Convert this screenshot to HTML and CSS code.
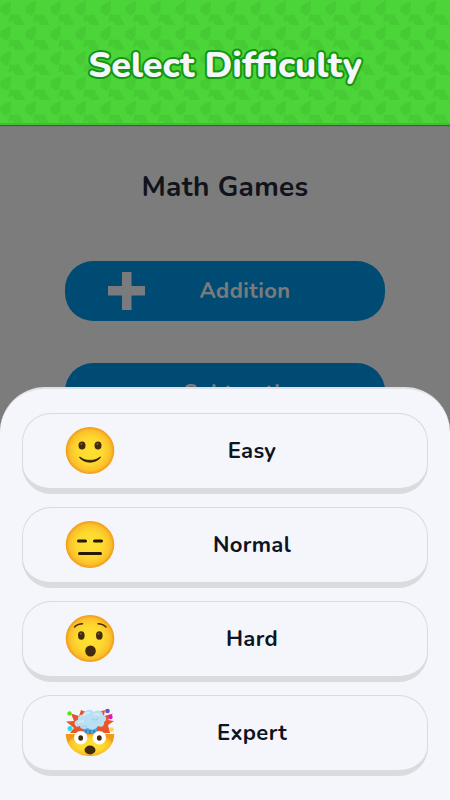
FILE: index.html
```html
<!DOCTYPE html>
<html lang="en">
<head>
    <meta charset="UTF-8">
    <meta name="viewport" content="width=device-width, initial-scale=1.0">
    <title>Math Games</title>
    <link rel="stylesheet" href="styles.css">
</head>
<body>
    <header class="header">
        <svg class="header-pattern" width="450" height="123">
            <defs>
                <pattern id="leaves" width="25" height="25" patternUnits="userSpaceOnUse">
                    <path d="M.5 6.500L5 3.500 11 .5 10.500 11 6.500 16 .3 12zM9.500 13.500L13 15l6-.7L25 25h-9.500L12.500 21 8 22.500z"/>
                </pattern>
            </defs>
            <rect width="450" height="123" fill="url(#leaves)"/>
        </svg>
        <h1>Select Difficulty</h1>
    </header>

    <!-- Games list -->
    <div class="games">
        <h2>Math Games</h2>
        <button class="game-btn">
            <svg class="plus" width="38" height="38" viewBox="0 0 38 38"><path d="M14 0h9.500v14H37v9.500H23.500V38H14V23.500H0V14h14z"/></svg>
            <span>Addition</span>
        </button>
        <button class="game-btn">
            <span>Subtraction</span>
        </button>
    </div>
    <div class="overlay"></div>

    <!-- Difficulty sheet -->
    <div class="sheet">
        <button class="level">
            <svg class="emoji" viewBox="0 0 50 50">
                <defs>
                    <radialGradient id="face">
                        <stop offset="0" stop-color="#fee133"/>
                        <stop offset=".55" stop-color="#fdd92f"/>
                        <stop offset=".85" stop-color="#fbc02a"/>
                        <stop offset="1" stop-color="#f19a16"/>
                    </radialGradient>
                </defs>
                <ellipse cx="25" cy="24.500" rx="24.300" ry="23.500" fill="url(#face)"/>
                <g fill="#422b0d">
                    <ellipse cx="17" cy="19.500" rx="3.500" ry="4.100"/>
                    <ellipse cx="33" cy="19.500" rx="3.500" ry="4.100"/>
                </g>
                <g fill="#7b5a33"><circle cx="16.300" cy="18" r="1"/><circle cx="32.300" cy="18" r="1"/></g>
                <path d="M15 31C18 33.500 21 34.300 25 34.300s7-.8 10-3.300c.7-.5.5.5 0 1.200-5.500 5.400-14.500 5.400-20 0-.6-.8-.7-1.600 0-1.200z" fill="#2c1c05" stroke="#2c1c05" stroke-width=".6"/>
            </svg>
            <span>Easy</span>
        </button>
        <button class="level">
            <svg class="emoji" viewBox="0 0 50 50">
                <ellipse cx="25" cy="24.500" rx="24.300" ry="23.500" fill="url(#face)"/>
                <path d="M13.500 21h7M29.500 21h7M14.500 33.500h21" stroke="#241704" stroke-width="3" stroke-linecap="round"/>
            </svg>
            <span>Normal</span>
        </button>
        <button class="level">
            <svg class="emoji" viewBox="0 0 50 50">
                <ellipse cx="25" cy="24.500" rx="24.300" ry="23.500" fill="url(#face)"/>
                <path d="M9.500 13q3-3.300 8-3.300M33 9.700q5 0 8 3.300" stroke="#422b0d" stroke-width="1.400" stroke-linecap="round" fill="none"/>
                <g fill="#422b0d">
                    <ellipse cx="16.300" cy="21.500" rx="3.300" ry="4.200"/>
                    <ellipse cx="34.300" cy="21.500" rx="3.300" ry="4.200"/>
                    <ellipse cx="25.500" cy="37" rx="5.300" ry="5.500"/>
                </g>
                <g fill="#7b5a33"><circle cx="15.700" cy="19.800" r="1"/><circle cx="33.700" cy="19.800" r="1"/></g>
            </svg>
            <span>Hard</span>
        </button>
        <button class="level">
            <svg class="emoji" viewBox="0 0 50 50">
                <path d="M5 25L9 20 1 13.500 9 13 6 5.500 14 8 16 2 26 6 40 2 39 8 48 5.500 43 12 49 13 43 17 45 25z" fill="#e9552b"/>
                <path d="M20 16h11l1 6 6 5H14l5-5z" fill="#4ba3dc"/>
                <path d="M.8 26H49.200C49 39.500 38 48 25 48S1 39.500 .8 26z" fill="url(#face)"/>
                <path d="M11 18c-3-2-1-6 2-6-1-4 3-6 5-5 1-5 8-7 11-3 4-3 9-1 9 3 4 1 4 6 1 7 1 4-3 6-6 4-3 5-8 4-10 2-4 2-8 1-8-2-2 1-4 1-4 0z" fill="#b9dff4"/>
                <path d="M18 8q2-4 7-3M29 7q4-2 6 1M13 15q3-3 6-1" fill="none" stroke="#d2eaf8" stroke-width="2.200"/>
                <path d="M17 19q3-2 5 0M27 11q3 2 6 0" fill="none" stroke="#9bcfec" stroke-width="1.200"/>
                <path d="M20 25l1.500-3M25 26v-4M30 25l-1.500-3" stroke="#2c82bd" stroke-width="1.500"/>
                <circle cx="4.500" cy="5.500" r="2.200" fill="#5be313"/>
                <circle cx="42.500" cy="3" r="2.300" fill="#5554dc"/>
                <circle cx="45.500" cy="9" r="2.200" fill="#e311d0"/>
                <circle cx="5" cy="20.500" r="2.500" fill="#18e4ee"/>
                <circle cx="46.500" cy="21.500" r="2.300" fill="#ffd259"/>
                <circle cx="15.700" cy="29.800" r="6.700" fill="#fff"/>
                <circle cx="34.300" cy="29.800" r="6.700" fill="#fff"/>
                <ellipse cx="15.700" cy="30" rx="2.400" ry="2.700" fill="#422b0d"/>
                <ellipse cx="34.300" cy="30" rx="2.400" ry="2.700" fill="#422b0d"/>
                <ellipse cx="25" cy="42" rx="5.500" ry="4.400" fill="#422b0d"/>
            </svg>
            <span>Expert</span>
        </button>
    </div>
</body>
</html>
```
FILE: styles.css
```css
* {
    box-sizing: border-box;
}
body {
    margin: 0;
    height: 800px;
    overflow: hidden;
    position: relative;
    background-color: #f8f8fb;
    font-family: Nunito, Lato, sans-serif;
    color: #151b28;
}
button {
    font-family: inherit;
    border: none;
    padding: 0;
    cursor: pointer;
}
.header {
    position: relative;
    z-index: 2;
    height: 125px;
    background-color: #4cd538;
    border-bottom: 2px solid #43bd33;
    box-shadow: 0 1px 1px #55505a;
    display: flex;
    justify-content: center;
}
.header-pattern {
    position: absolute;
    top: 0;
    left: 0;
    fill: #47cb35;
}
.header h1 {
    position: relative;
    margin: 43px 0 0;
    font-size: 36px;
    line-height: 46px;
    font-weight: 800;
    color: #f5f6fb;
    -webkit-text-stroke: 4px #129711;
    paint-order: stroke fill;
    text-shadow: 0 1px 2px #129711;
}
.games {
    display: flex;
    flex-direction: column;
    align-items: center;
}
.games h2 {
    margin: 44px 0 55px;
    font-size: 28px;
    line-height: 37px;
    font-weight: 670;
    letter-spacing: 0.3px;
    color: #222836;
}
.game-btn {
    width: 320px;
    height: 60px;
    margin-bottom: 42px;
    border-radius: 28px;
    background-color: #0096e6;
    color: #f5f6fb;
    font-size: 22px;
    font-weight: 670;
    letter-spacing: 0.35px;
    display: grid;
    grid-template-columns: 124px 112px;
    align-items: center;
}
.game-btn span {
    grid-column: 2;
    line-height: 28px;
    text-align: center;
    white-space: nowrap;
    justify-self: center;
}
.plus {
    justify-self: center;
    fill: #f5f6fb;
}
.overlay {
    position: absolute;
    inset: 0;
    background-color: rgba(0, 0, 0, 0.5);
}
.sheet {
    position: absolute;
    left: 0;
    right: 0;
    bottom: 0;
    height: 413px;
    padding: 24px 22px 0;
    border-top: 2px solid #e0e1e6;
    border-radius: 45px 45px 0 0;
    background-color: #f5f6fb;
    display: flex;
    flex-direction: column;
    gap: 13px;
}
.level {
    height: 81px;
    border: 1px solid #d9dade;
    border-bottom: 6px solid #dadbdf;
    border-radius: 29px;
    background-color: #f5f6fb;
    color: #0d1422;
    font-size: 22px;
    font-weight: 670;
    letter-spacing: 0.35px;
    display: grid;
    grid-template-columns: 50px 1fr;
    align-items: center;
    padding: 0 84px 0 42px;
}
.level span {
    padding-left: 46px;
    text-align: center;
}
.emoji {
    width: 50px;
    height: 50px;
}
```
